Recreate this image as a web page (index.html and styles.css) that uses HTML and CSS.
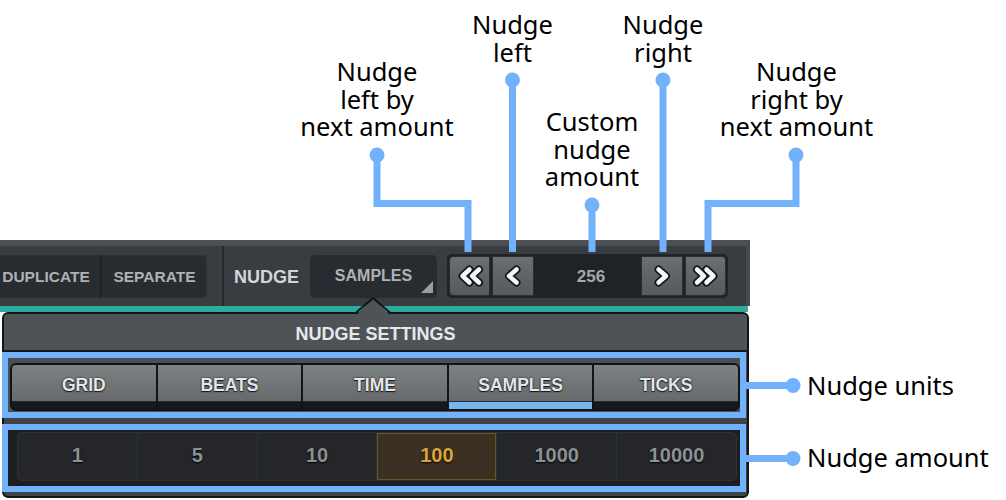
FILE: index.html
```html
<!DOCTYPE html>
<html>
<head>
<meta charset="utf-8">
<link rel="stylesheet" href="styles.css">
</head>
<body>
<div class="stage">
  <div class="app">
    <div class="toolbar">
      <div class="edit">
        <div class="tb-btn dup">DUPLICATE</div>
        <div class="tb-btn sep">SEPARATE</div>
      </div>
      <div class="vsep"></div>
      <div class="nudge-label">NUDGE</div>
      <div class="dropdown">SAMPLES<span class="corner"></span></div>
      <div class="nudge-group">
        <div class="nb first">
          <svg width="30" height="22" viewBox="0 0 30 22">
            <path class="co" d="M24 4.5 L17 11 L24 17.5"/><path class="ci" d="M24 4.5 L17 11 L24 17.5"/>
            <path class="co" d="M14.5 4.5 L7.5 11 L14.5 17.5"/><path class="ci" d="M14.5 4.5 L7.5 11 L14.5 17.5"/>
          </svg>
        </div>
        <div class="nb">
          <svg width="20" height="22" viewBox="0 0 20 22">
            <path class="co" d="M13.5 4.5 L6 11 L13.5 17.5"/><path class="ci" d="M13.5 4.5 L6 11 L13.5 17.5"/>
          </svg>
        </div>
        <div class="value">256</div>
        <div class="nb">
          <svg width="20" height="22" viewBox="0 0 20 22">
            <path class="co" d="M6.5 4.5 L14 11 L6.5 17.5"/><path class="ci" d="M6.5 4.5 L14 11 L6.5 17.5"/>
          </svg>
        </div>
        <div class="nb last">
          <svg width="30" height="22" viewBox="0 0 30 22">
            <path class="co" d="M6 4.5 L13 11 L6 17.5"/><path class="ci" d="M6 4.5 L13 11 L6 17.5"/>
            <path class="co" d="M15.5 4.5 L22.5 11 L15.5 17.5"/><path class="ci" d="M15.5 4.5 L22.5 11 L15.5 17.5"/>
          </svg>
        </div>
      </div>
    </div>
    <div class="teal"></div>
    <div class="popup">
      <svg class="pointer" width="36" height="18" viewBox="0 0 36 18">
        <polygon points="1,18 18,2 35,18" fill="#4f5357"/>
        <polyline points="0,16.5 18,1 36,16.5" fill="none" stroke="#121416" stroke-width="2"/>
      </svg>
      <div class="popup-head">NUDGE SETTINGS</div>
      <div class="units-area">
        <div class="seg">
          <div class="unit"><div class="face">GRID</div><div class="strip"></div></div>
          <div class="unit"><div class="face">BEATS</div><div class="strip"></div></div>
          <div class="unit"><div class="face">TIME</div><div class="strip"></div></div>
          <div class="unit active"><div class="face">SAMPLES</div><div class="strip"></div></div>
          <div class="unit"><div class="face">TICKS</div><div class="strip"></div></div>
        </div>
      </div>
      <div class="amount-area">
        <div class="amounts">
          <div class="amt">1</div>
          <div class="amt">5</div>
          <div class="amt">10</div>
          <div class="amt sel">100</div>
          <div class="amt">1000</div>
          <div class="amt">10000</div>
        </div>
      </div>
    </div>
  </div>

  <svg class="annot" width="1006" height="500" viewBox="0 0 1006 500">
    <g fill="none" stroke="#72b1fb" stroke-width="7">
      <polyline points="377,155 377,203.5 468,203.5 468,252"/>
      <line x1="512.5" y1="80" x2="512.5" y2="252"/>
      <line x1="592" y1="205" x2="592" y2="252"/>
      <line x1="663" y1="80" x2="663" y2="252"/>
      <polyline points="796,155 796,203.5 708,203.5 708,252"/>
      <line x1="746" y1="385.5" x2="793" y2="385.5"/>
      <line x1="746" y1="458.5" x2="793" y2="458.5"/>
    </g>
    <g fill="none" stroke="#72b1fb" stroke-width="6">
      <rect x="5" y="355" width="738" height="60"/>
      <rect x="5" y="427" width="738" height="62"/>
    </g>
    <g fill="#72b1fb">
      <circle cx="377" cy="155" r="7.5"/>
      <circle cx="512.5" cy="80" r="7.5"/>
      <circle cx="592" cy="205" r="7.5"/>
      <circle cx="663" cy="80" r="7.5"/>
      <circle cx="796" cy="155" r="7.5"/>
      <circle cx="793" cy="385.5" r="7.5"/>
      <circle cx="793" cy="458.5" r="7.5"/>
    </g>
  </svg>

  <div class="note n-left-next">Nudge<br>left by<br>next amount</div>
  <div class="note n-left">Nudge<br>left</div>
  <div class="note n-custom">Custom<br>nudge<br>amount</div>
  <div class="note n-right">Nudge<br>right</div>
  <div class="note n-right-next">Nudge<br>right by<br>next amount</div>
  <div class="note side n-units">Nudge units</div>
  <div class="note side n-amount">Nudge amount</div>
</div>
</body>
</html>
```

FILE: styles.css
```css
* { box-sizing: border-box; }
body {
  margin: 0;
  background: #fff;
  width: 1006px;
  height: 500px;
  overflow: hidden;
  font-family: "Liberation Sans", Arial, sans-serif;
}
.stage { position: relative; width: 1006px; height: 500px; }
.app { padding-top: 240px; width: 750px; }

.toolbar {
  height: 66px;
  background: #393d41;
  border-top: 6px solid #4c5054;
  border-right: 4px solid #474b4f;
  display: flex;
  align-items: center;
  overflow: hidden;
}
.edit {
  display: flex;
  flex: none;
  margin-left: -8px;
  height: 43px;
  background: #282b2f;
  border-radius: 5px;
  box-shadow: inset 0 0 0 1px #2f3236;
}
.tb-btn {
  display: flex;
  align-items: center;
  justify-content: center;
  color: #aeb2b5;
  font-weight: bold;
  font-size: 15.5px;
  padding-top: 1px;
}
.dup { width: 110px; border-right: 2px solid #1f2225; }
.sep { width: 105px; }
.vsep { align-self: stretch; width: 2px; flex: none; background: #25282b; margin-left: 15px; }
.nudge-label { margin-left: 10px; color: #d3d6d8; font-weight: bold; font-size: 18px; padding-top: 2px; }
.dropdown {
  position: relative;
  flex: none;
  margin-left: 11px;
  width: 127px;
  height: 43px;
  background: #282b2f;
  border-radius: 5px;
  display: flex;
  align-items: center;
  justify-content: center;
  color: #aeb2b5;
  font-weight: bold;
  font-size: 16px;
}
.corner {
  position: absolute;
  right: 4px;
  bottom: 5px;
  width: 0;
  height: 0;
  border-left: 12px solid transparent;
  border-bottom: 12px solid #9a9ea1;
}
.nudge-group {
  flex: none;
  margin-left: 10px;
  display: flex;
  height: 44px;
  padding: 2px;
  background: #1f2226;
  border-radius: 5px;
}
.nb {
  width: 42px;
  height: 40px;
  background: linear-gradient(#6a6e70, #565a5c);
  border: 1px solid #2c2f32;
  display: flex;
  align-items: center;
  justify-content: center;
}
.nb + .nb { margin-left: 2px; }
.nb.first { width: 41px; border-radius: 4px 0 0 4px; }
.nb.last { width: 41px; border-radius: 0 4px 4px 0; }
.co { fill: none; stroke: #151719; stroke-width: 8; stroke-linecap: round; stroke-linejoin: round; }
.ci { fill: none; stroke: #f4f6f7; stroke-width: 4.5; stroke-linecap: round; stroke-linejoin: round; }
.value {
  width: 106px;
  display: flex;
  align-items: center;
  justify-content: center;
  color: #a5a9ac;
  font-weight: bold;
  font-size: 17px;
  padding: 2px 0 0 8px;
  margin-right: 1px;
}

.teal { height: 6px; width: 748px; background: #2cab9f; }

.popup {
  position: relative;
  margin-left: 2px;
  width: 747px;
  height: 186px;
  border: 2px solid #121416;
  border-radius: 6px;
  background: #3f4346;
}
.pointer { position: absolute; left: 351px; top: -17px; }
.popup-head {
  height: 38px;
  background: #4f5357;
  border-bottom: 2px solid #151719;
  border-radius: 4px 4px 0 0;
  display: flex;
  align-items: center;
  justify-content: center;
  padding-top: 4px;
  color: #e6e9eb;
  font-size: 18px;
  font-weight: bold;
}
.units-area {
  height: 66px;
  background: #4b4f52;
  padding: 11px 7px 0 6px;
}
.seg {
  display: flex;
  gap: 2px;
  height: 48px;
  border: 2px solid #111315;
  border-radius: 6px;
  background: #111418;
  overflow: hidden;
}
.unit { flex: 1; display: flex; flex-direction: column; }
.face {
  height: 37px;
  background: linear-gradient(#7d8285, #666a6d);
  border-bottom: 1px solid #262a2d;
  display: flex;
  align-items: center;
  justify-content: center;
  padding-top: 4px;
  color: #e4e7e9;
  font-size: 17.5px;
  font-weight: bold;
  text-shadow: 0 0 2px #15171a, 0 1px 1px #15171a;
}
.strip { flex: 1; background: #141a20; }
.unit.active .strip { background: #77b5ef; }

.amount-area {
  margin: 10px 0 0 4px;
  width: 733px;
  height: 60px;
  background: #1c1e21;
  border-radius: 4px;
  padding: 4px 4px 0 9px;
}
.amounts {
  display: flex;
  height: 49px;
  border: 1px solid #2e3134;
  border-radius: 5px;
  background: #242629;
  overflow: hidden;
}
.amt {
  flex: 1;
  display: flex;
  align-items: center;
  justify-content: center;
  padding-bottom: 3px;
  color: #8d9194;
  font-weight: bold;
  font-size: 20px;
  text-shadow: 0 1px 2px #000;
  border-left: 1px solid #2e3134;
}
.amt:first-child { border-left: none; }
.amt.sel { background: #3b3123; box-shadow: inset 0 0 0 1px #6d5529; color: #dca53b; }

.annot { position: absolute; left: 0; top: 0; }
.note {
  position: absolute;
  width: 200px;
  text-align: center;
  font-family: "Noto Sans", "Open Sans", sans-serif;
  font-size: 25.5px;
  line-height: 27.5px;
  color: #000;
}
.n-left-next { left: 277px; top: 58px; }
.n-left { left: 412.5px; top: 11px; }
.n-custom { left: 492px; top: 108px; }
.n-right { left: 563px; top: 11px; }
.n-right-next { left: 696.5px; top: 58px; }
.side { width: auto; text-align: left; white-space: nowrap; left: 807px; }
.n-units { top: 372px; }
.n-amount { top: 444px; }
```
